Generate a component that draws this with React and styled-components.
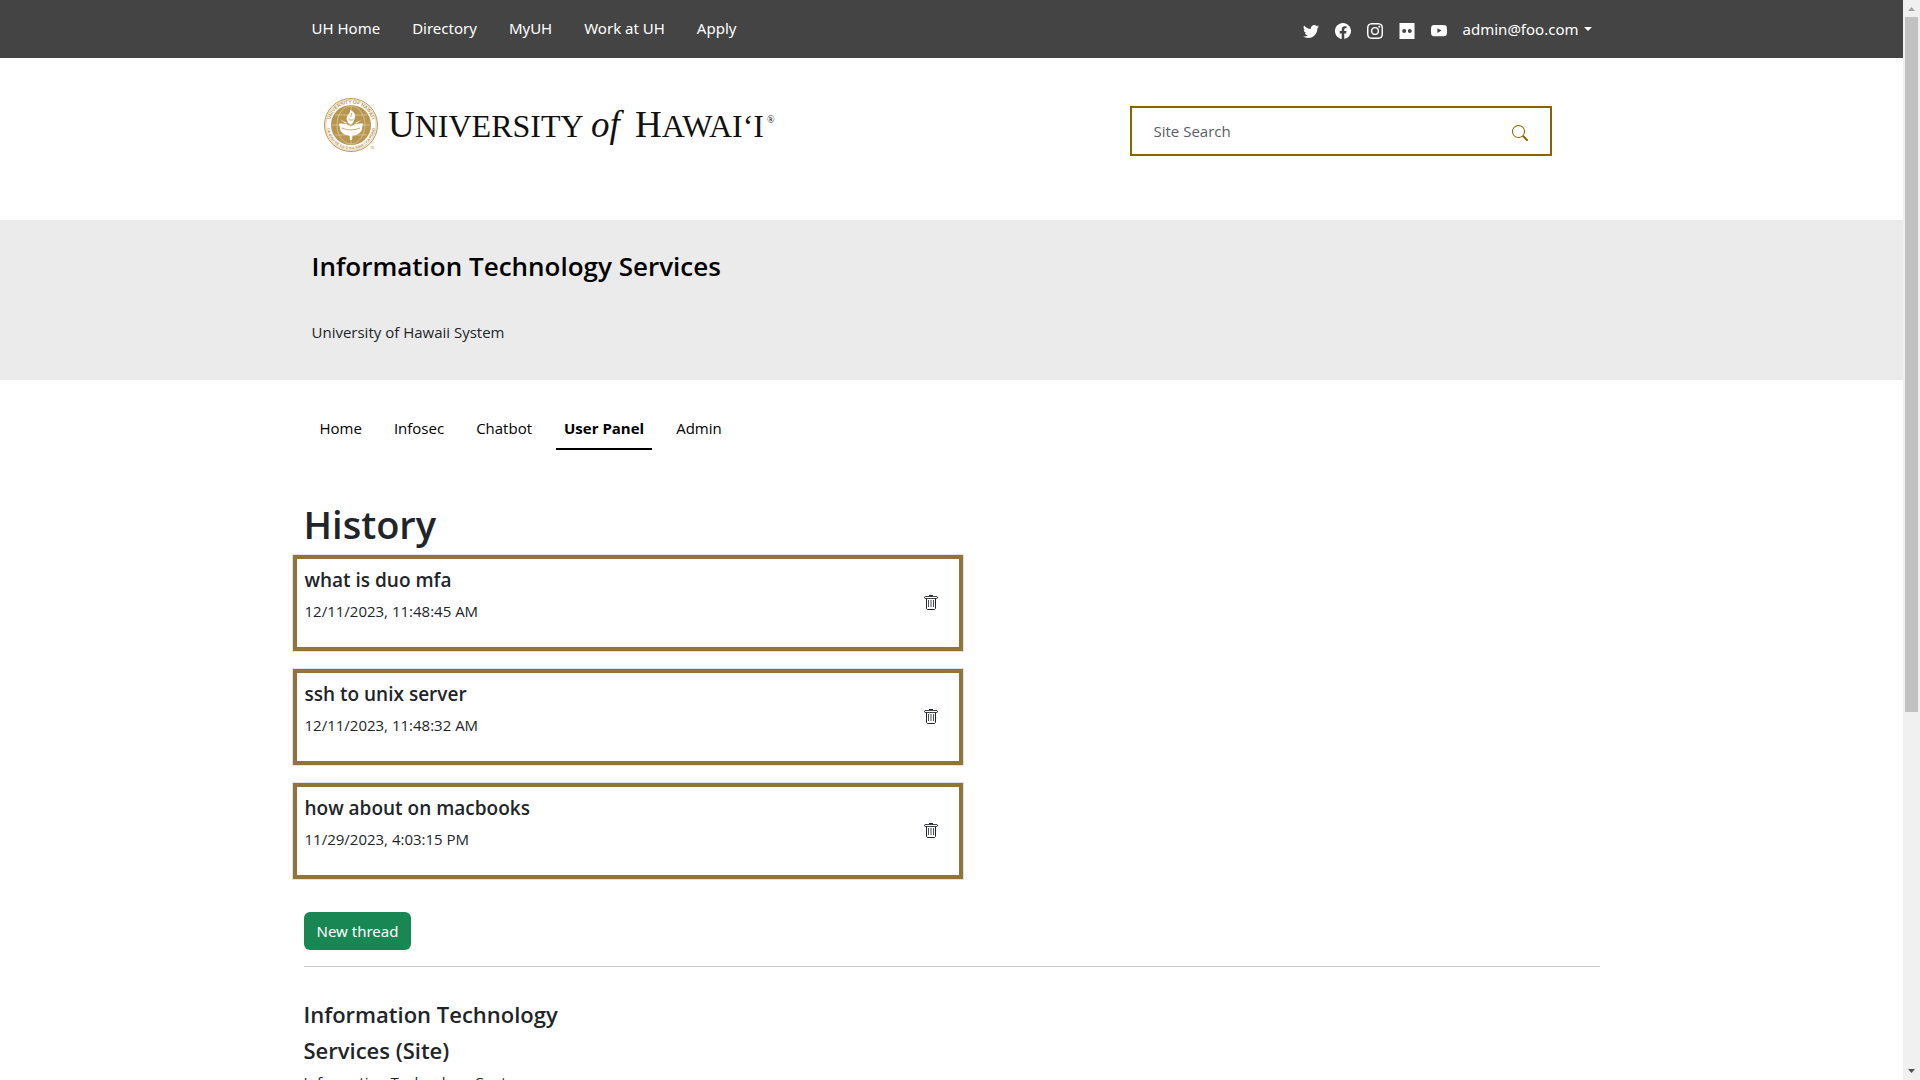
import React from 'react';
import styled, { createGlobalStyle } from 'styled-components';
import { BsTwitter, BsFacebook, BsInstagram, BsYoutube, BsSearch } from 'react-icons/bs';

const GlobalStyle = createGlobalStyle`
  *, *::before, *::after { box-sizing: border-box; }
  body {
    margin: 0;
    background: #fff;
    color: #212529;
    font-family: "Open Sans", "Noto Sans", sans-serif;
    font-size: 15px;
    line-height: 24px;
  }
  h1, h2, h3, p, ul { margin: 0; padding: 0; }
  ul { list-style: none; }
  a { color: inherit; text-decoration: none; }
  button, input { font: inherit; }
`;

const Shell = styled.div`
  display: flex;
  height: 100vh;
`;

const Page = styled.div`
  flex: 1;
  min-width: 0;
  overflow: hidden;
`;

const Container = styled.div`
  width: 100%;
  max-width: 1320px;
  margin: 0 auto;
  padding: 0 ${(p) => p.$pad || 12}px;
`;

const TopBar = styled.header`
  background: #444;
  color: #fff;
  font-family: "Noto Sans", "Open Sans", sans-serif;
`;

const TopBarInner = styled(Container)`
  display: flex;
  align-items: center;
  justify-content: space-between;
  min-height: 58px;
`;

const LinkRow = styled.ul`
  display: flex;
  gap: 32px;
  padding-bottom: 2px;
`;

const Account = styled.div`
  display: flex;
  align-items: center;
  gap: 16px;
`;

const IconLink = styled.a`
  display: flex;
  padding-top: 4px;
`;

const AccountButton = styled.button`
  display: flex;
  align-items: center;
  gap: 5px;
  padding: 0;
  border: 0;
  background: none;
  color: #fff;
`;

const Caret = styled.span`
  border-top: 4px solid;
  border-left: 4px solid transparent;
  border-right: 4px solid transparent;
`;

const Masthead = styled(Container)`
  display: flex;
  align-items: flex-start;
  justify-content: space-between;
  padding: 32px 60px 60px 32px;
`;

const LogoSvg = styled.svg`
  display: block;
  font-family: "Liberation Serif", serif;
`;

const SearchForm = styled.form`
  display: flex;
  align-items: center;
  width: 422px;
  height: 50px;
  margin-top: 16px;
  padding: 0 22px;
  border: 2px solid #876500;
`;

const SearchInput = styled.input`
  flex: 1;
  min-width: 0;
  padding: 0;
  border: 0;
  outline: 0;
  background: none;
  &::placeholder { color: #5b6066; opacity: 1; }
`;

const IconButton = styled.button`
  display: flex;
  padding: 0;
  border: 0;
  background: none;
  color: ${(p) => p.$color || '#212529'};
`;

const SearchButton = styled(IconButton)`
  padding-top: 4px;
`;

const Band = styled.section`
  background: #ebebeb;
  padding: 28px 0 36px;
`;

const BandTitle = styled.h2`
  margin-bottom: 36px;
  color: #000;
  font-size: 26px;
  font-weight: 600;
  line-height: 36px;
`;

const Tabs = styled.ul`
  display: flex;
  gap: 16px;
  padding: 32px 8px 48px;
`;

const TabLink = styled.a`
  display: block;
  padding: 4px 8px 8px;
  border-bottom: 2px solid ${(p) => (p.$active ? '#000' : 'transparent')};
  color: #000;
  font-weight: ${(p) => (p.$active ? 700 : 400)};
`;

const PageTitle = styled.h1`
  padding-top: 2px;
  margin-bottom: 6px;
  font-size: 38px;
  font-weight: 600;
  line-height: 48px;
`;

const ThreadList = styled.ul`
  display: grid;
  gap: 16px;
  width: calc(50% + 24px);
  margin: 0 -12px 32px;
`;

const Thread = styled.li`
  display: flex;
  align-items: center;
  justify-content: space-between;
  padding: 12px 24px 12px 12px;
  border: 1px solid #dee2e6;
  box-shadow: inset 0 0 0 4px #92733a;
`;

const ThreadTitle = styled.h3`
  margin-bottom: 6px;
  font-size: 19px;
  font-weight: 600;
  line-height: 26px;
`;

const ThreadDate = styled.p`
  margin-bottom: 16px;
`;

const PrimaryButton = styled.button`
  display: block;
  height: 38px;
  padding: 0 13px;
  border: 0;
  border-radius: 6px;
  background: #198754;
  color: #fff;
  font-family: "Noto Sans", "Open Sans", sans-serif;
`;

const Rule = styled.hr`
  height: 1px;
  margin: 16px 0 29px;
  border: 0;
  background: #c7c8c9;
`;

const FooterColumn = styled.div`
  width: 25%;
`;

const FooterTitle = styled.h2`
  margin-bottom: 2px;
  font-size: 22px;
  font-weight: 600;
  line-height: 36px;
`;

const ScrollTrack = styled.div`
  display: flex;
  flex-direction: column;
  flex: 0 0 17px;
  padding: 0 2px;
  background: #f0f0f0;
`;

const ScrollArrow = styled.svg`
  display: block;
  width: 13px;
  height: 17px;
`;

const ScrollLane = styled.div`
  flex: 1;
`;

const ScrollThumb = styled.div`
  height: ${(p) => p.$ratio}%;
  background: #c1c1c1;
`;

const TOP_LINKS = ['UH Home', 'Directory', 'MyUH', 'Work at UH', 'Apply'];
const TABS = ['Home', 'Infosec', 'Chatbot', 'User Panel', 'Admin'];
const THREADS = [
  { title: 'what is duo mfa', date: '12/11/2023, 11:48:45 AM' },
  { title: 'ssh to unix server', date: '12/11/2023, 11:48:32 AM' },
  { title: 'how about on macbooks', date: '11/29/2023, 4:03:15 PM' },
];

function FlickrIcon() {
  return (
    <svg width="16" height="16" viewBox="0 0 16 16" fill="currentColor" aria-hidden="true">
      <path
        fillRule="evenodd"
        d="M.5 0h15v16H.5zM5.200 6.100a2 2 0 1 0 0 4 2 2 0 0 0 0-4m5.600 0a2 2 0 1 0 0 4 2 2 0 0 0 0-4"
      />
    </svg>
  );
}

function TrashIcon() {
  return (
    <svg width="16" height="16" viewBox="0.5 0 16 16" fill="none" stroke="currentColor" aria-hidden="true">
      <path d="M6.500.5h4" />
      <path d="M2.500 1.500h12l.5.500v1l-.5.500h-12l-.5-.500v-1z" strokeOpacity=".85" />
      <path d="M4 3.500V13.500l1 1h7l1-1V3.500" />
      <path d="M6 5v7M11 5v7" strokeOpacity=".8" />
      <path d="M8.500 5v7" strokeWidth="2" strokeOpacity=".4" />
    </svg>
  );
}

const SOCIAL = [
  ['Twitter', BsTwitter],
  ['Facebook', BsFacebook],
  ['Instagram', BsInstagram],
  ['Flickr', FlickrIcon],
  ['YouTube', BsYoutube],
];

function Logo() {
  const gold = '#b8964f';
  return (
    <LogoSvg width="456" height="70" viewBox="0 0 456 70" role="img" aria-label="University of Hawaiʻi">
      <defs>
        <path id="seal-top" d="M5.500 35a21.500 21.500 0 0 1 43 0" />
        <path id="seal-bottom" d="M2.700 35a24.300 24.300 0 0 0 48.600 0" />
      </defs>
      <circle cx="27" cy="35" r="26.500" fill="#fff" stroke={gold} />
      <circle cx="27" cy="35" r="25.200" fill="none" stroke={gold} strokeWidth=".4" />
      <circle cx="27" cy="35" r="20" fill={gold} />
      <g fill="none" stroke="#e6d8b8" strokeWidth=".6">
        <path d="M27 16v38M8 35h38M11 25h32M11 45h32" />
        <ellipse cx="27" cy="35" rx="14" ry="19" />
      </g>
      <path
        fill="#fff"
        d="M15 33.500c5-.5 8.500.5 12 3 3.500-2.500 7-3.500 12-3l-1.500 7.500c-3.500 4-6.500 4.500-9 4.500l-.5 4.500h-2l-.5-4.500c-2.500 0-5.500-.5-9-4.500z"
      />
      <path fill="#fff" d="m24 33-1.500-4c0-4 4-4.500 3.500-9 5 2 6 5 4.500 9L29 33l-2 1.500zM16 29.500l7 3.500-1 .7zM38 29.500 31 33l1 .7z" />
      <path d="M18 38c6 2.500 12 2.500 18 0M24.500 29c1 1.500 4 1.500 5 0M27 27c-.7-1.500 1-2.500.7-4" fill="none" stroke={gold} strokeWidth=".8" />
      <g fill={gold} fontFamily="Liberation Sans, sans-serif" fontWeight="700">
        <text fontSize="4.800">
          <textPath href="#seal-top" startOffset="50%" textAnchor="middle">UNIVERSITY OF HAWAIʻI</textPath>
        </text>
        <text fontSize="3.800">
          <textPath href="#seal-bottom" startOffset="50%" textAnchor="middle">UA MAU KE EA O KA AINA I KA PONO</textPath>
        </text>
        <text x="46" y="59" fontSize="3" fontWeight="400">TM</text>
      </g>
      <g fill="#111">
        <text x="64" y="47" fontSize="32"><tspan fontSize="37">U</tspan>NIVERSITY</text>
        <text x="267" y="47" fontSize="37" fontStyle="italic">of</text>
        <text x="311" y="47" fontSize="32"><tspan fontSize="37">H</tspan>AWAI‘I</text>
        <text x="443" y="33" fontSize="10">®</text>
      </g>
    </LogoSvg>
  );
}

export default function App() {
  return (
    <Shell>
      <GlobalStyle />
      <Page>
        <TopBar>
          <TopBarInner $pad={20}>
            <nav aria-label="University">
              <LinkRow>
                {TOP_LINKS.map((label) => (
                  <li key={label}><a href="#">{label}</a></li>
                ))}
              </LinkRow>
            </nav>
            <Account>
              {SOCIAL.map(([label, Icon]) => (
                <IconLink key={label} href="#" aria-label={label}><Icon size={16} /></IconLink>
              ))}
              <AccountButton type="button">admin@foo.com<Caret /></AccountButton>
            </Account>
          </TopBarInner>
        </TopBar>

        <Masthead>
          <a href="#"><Logo /></a>
          <SearchForm role="search">
            <SearchInput type="text" placeholder="Site Search" aria-label="Site Search" />
            <SearchButton type="button" $color="#876500" aria-label="Search"><BsSearch size={16} /></SearchButton>
          </SearchForm>
        </Masthead>

        <Band>
          <Container $pad={20}>
            <BandTitle>Information Technology Services</BandTitle>
            <p>University of Hawaii System</p>
          </Container>
        </Band>

        <Container>
          <nav aria-label="Sections">
            <Tabs>
              {TABS.map((label) => (
                <li key={label}>
                  <TabLink href="#" $active={label === 'User Panel'}>{label}</TabLink>
                </li>
              ))}
            </Tabs>
          </nav>

          <main>
            <PageTitle>History</PageTitle>
            <ThreadList>
              {THREADS.map(({ title, date }) => (
                <Thread key={title}>
                  <div>
                    <ThreadTitle>{title}</ThreadTitle>
                    <ThreadDate>{date}</ThreadDate>
                  </div>
                  <IconButton type="button" aria-label={`Delete ${title}`}><TrashIcon /></IconButton>
                </Thread>
              ))}
            </ThreadList>
            <PrimaryButton type="button">New thread</PrimaryButton>
          </main>

          <Rule />

          <footer>
            <FooterColumn>
              <FooterTitle>Information Technology Services (Site)</FooterTitle>
              <p>Information Technology Center</p>
            </FooterColumn>
          </footer>
        </Container>
      </Page>

      <ScrollTrack aria-hidden="true">
        <ScrollArrow viewBox="0 0 13 17"><path d="M3 11h7L6.500 7z" fill="#a3a3a3" /></ScrollArrow>
        <ScrollLane><ScrollThumb $ratio={66.4} /></ScrollLane>
        <ScrollArrow viewBox="0 0 13 17"><path d="M3 6h7l-3.500 4z" fill="#505050" /></ScrollArrow>
      </ScrollTrack>
    </Shell>
  );
}
